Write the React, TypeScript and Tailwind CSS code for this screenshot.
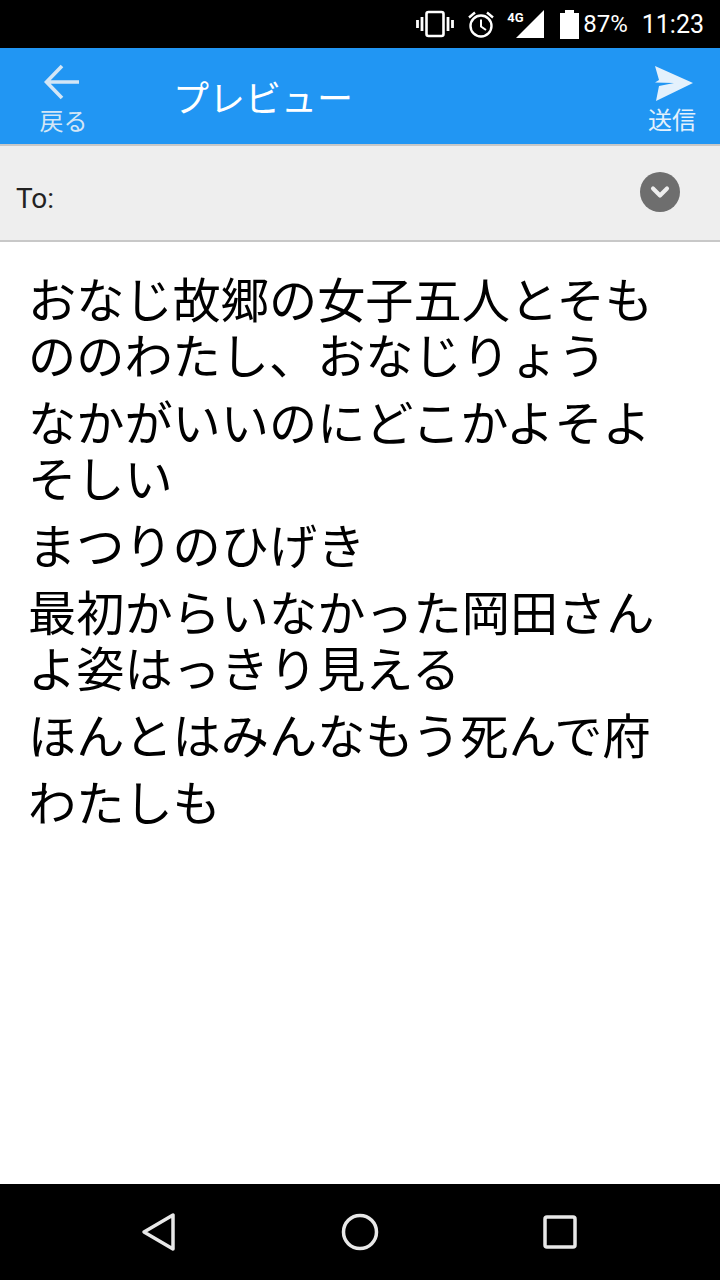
import { ChevronDown } from "lucide-react";

const paragraphs = [
  ["おなじ故郷の女子五人とそも", "ののわたし、おなじりょう"],
  ["なかがいいのにどこかよそよ", "そしい"],
  ["まつりのひげき"],
  ["最初からいなかった岡田さん", "よ姿はっきり見える"],
  ["ほんとはみんなもう死んで府"],
  ["わたしも"],
];

function StatusBar() {
  return (
    <div className="flex h-12 items-center justify-end bg-black pr-4 text-white">
      <svg width="38" height="28" viewBox="0 0 38 28" fill="none" className="mr-[13px]">
        <rect x="10.5" y="2" width="17" height="24" rx="2" stroke="white" strokeWidth="2.6" />
        <path d="M1.5 10v8M6 7v14M32 7v14M36.5 10v8" stroke="white" strokeWidth="2.8" />
      </svg>
      <svg width="28" height="28" viewBox="0 0 28 28" fill="none" className="mr-[21px]">
        <circle cx="14" cy="16" r="10.5" stroke="white" strokeWidth="2.4" />
        <path d="M14 9.5V16.5L19 20" stroke="white" strokeWidth="2" />
        <path d="M2 7.5L8 2.5M26 7.5L20 2.5" stroke="white" strokeWidth="2.4" />
      </svg>
      <div className="relative mr-[16px] h-7 w-7">
        <svg width="28" height="28" viewBox="0 0 28 28" className="absolute inset-0">
          <path d="M28 0V28H0Z" fill="white" />
        </svg>
        <span className="absolute top-[1px] left-[-9px] font-['Roboto',sans-serif] text-[13px] leading-none font-bold">
          4G
        </span>
      </div>
      <svg width="19" height="29" viewBox="0 0 19 29" className="mr-[4px]">
        <path d="M5 0h9v3h5v26H0V3h5Z" fill="white" />
      </svg>
      <span className="font-['Roboto',sans-serif] text-[24px] leading-none">87%</span>
      <span className="ml-[14px] font-['Roboto',sans-serif] text-[25px] leading-none">11:23</span>
    </div>
  );
}

function Header() {
  return (
    <div className="flex h-24 items-center bg-[#2196f3] font-['Noto_Sans_CJK_JP',sans-serif] text-white">
      <div className="flex w-[127px] flex-col items-center pt-[6px] text-[#d3e6f6]">
        <svg width="36" height="36" viewBox="0 0 36 36" fill="none" className="mb-[6px] ml-[-3px]">
          <path d="M35 18H3M18 2L2.5 18L18 34" stroke="currentColor" strokeWidth="3.6" />
        </svg>
        <span className="text-[24px] leading-[28px]">戻る</span>
      </div>
      <h1 className="ml-[46px] flex-1 text-[36px] font-normal">プレビュー</h1>
      <div className="flex w-[96px] flex-col items-center pt-[8px] text-[#e4f1fc]">
        <svg width="40" height="36" viewBox="0 0 40 36" className="mb-[2px] ml-[3px]">
          <path d="M1 0L39 17L2 35L5 20L20 17L1 16.5L5 14Z" fill="currentColor" />
        </svg>
        <span className="text-[24px] leading-[30px]">送信</span>
      </div>
    </div>
  );
}

function ToRow() {
  return (
    <div className="flex h-[98px] items-center justify-between border-y-2 border-[#c8c8c8] bg-[#eeeeee] pl-4 pr-10">
      <span className="mt-[12px] font-['Roboto',sans-serif] text-[28px] text-[#222222]">To:</span>
      <div className="mb-[2px] flex h-10 w-10 items-center justify-center rounded-full bg-[#6e6e6e]">
        <ChevronDown className="h-7 w-7 text-[#eeeeee]" strokeWidth={3.5} />
      </div>
    </div>
  );
}

function NavBar() {
  return (
    <div className="flex h-24 items-center justify-center gap-[120px] bg-black">
      <svg width="40" height="40" viewBox="0 0 40 40" fill="none">
        <path d="M33 3V37L4 20Z" stroke="#e8e8e8" strokeWidth="3.5" strokeLinejoin="round" />
      </svg>
      <svg width="40" height="40" viewBox="0 0 40 40" fill="none" className="mx-[40px]">
        <circle cx="20" cy="20" r="16.5" stroke="#e8e8e8" strokeWidth="3.5" />
      </svg>
      <svg width="40" height="40" viewBox="0 0 40 40" fill="none">
        <rect x="5" y="5" width="30" height="30" rx="2" stroke="#e8e8e8" strokeWidth="3.5" />
      </svg>
    </div>
  );
}

export default function App() {
  return (
    <div className="flex h-[1280px] w-[720px] flex-col bg-white">
      <StatusBar />
      <Header />
      <ToRow />
      <div className="flex-1 pl-[28px] pt-[27px] font-['Noto_Sans_CJK_JP',sans-serif] text-[48.2px] leading-[56px] text-black">
        {paragraphs.map((lines, i) => (
          <p key={i} className="mb-[11px]">
            {lines.map((line) => (
              <span key={line} className="block">
                {line}
              </span>
            ))}
          </p>
        ))}
      </div>
      <NavBar />
    </div>
  );
}
